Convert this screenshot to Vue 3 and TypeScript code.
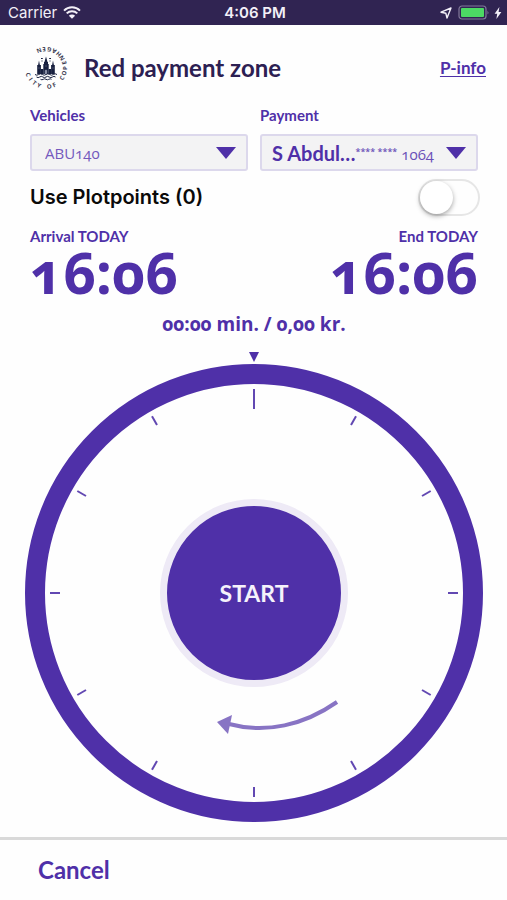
<script setup lang="ts">
import { computed, ref } from 'vue'

interface SealLetter {
  char: string
  transform: string
}

interface Tick {
  angle: number
  length: number
}

const vehicle = ref('ABU140')
const payer = ref('S Abdul…')
const usePlotpoints = ref(false)
const plotpoints = ref(0)
const arrival = ref('16:06')
const end = ref('16:06')
const duration = ref('00:00')
const price = ref('0,00')

const summary = computed(() => `${duration.value} min. / ${price.value} kr.`)

// The seal's lettering runs counter-clockwise, with the letter tops facing the centre.
const sealText = 'CITY OF COPENHAGEN'
const sealLetters: SealLetter[] = sealText.split('').map((char, i) => ({
  char,
  transform: `rotate(${70 - i * 16}) translate(0 21)`,
}))

const ticks: Tick[] = Array.from({ length: 12 }, (_, i) => ({
  angle: i * 30,
  length: i === 0 ? 20 : 10,
}))
</script>

<template>
  <div class="screen">
    <div class="status">
      <div class="status-side">
        <span class="carrier">Carrier</span>
        <svg class="wifi" viewBox="0 0 18 13" aria-hidden="true">
          <path d="M1 4.6a11.4 11.4 0 0 1 16 0" />
          <path d="M3.7 7.4a7.5 7.5 0 0 1 10.6 0" />
          <path class="solid" d="M9 12.8 5.9 9.7a4.4 4.4 0 0 1 6.2 0z" />
        </svg>
      </div>
      <span class="clock">4:06 PM</span>
      <div class="status-side status-right">
        <svg class="location" viewBox="0 0 12 12" aria-hidden="true">
          <path d="M11 1 7 11 5.8 6.2 1 5.2z" />
        </svg>
        <svg class="battery" viewBox="0 0 32 15" aria-hidden="true">
          <rect class="shell" x="1" y="1" width="27" height="13" rx="3" />
          <rect class="charge" x="3" y="3" width="23" height="9" rx="1" />
          <path class="cap" d="M29.5 5.5q1.8 2 0 4z" />
        </svg>
        <svg class="bolt" viewBox="0 0 8 12" aria-hidden="true">
          <path d="M5.4 0 .6 6.8h2.6L2.4 12l5-7H4.6z" />
        </svg>
      </div>
    </div>

    <header class="header">
      <svg class="seal" viewBox="-22 -22 44 44" role="img" aria-label="City of Copenhagen">
        <text v-for="(letter, i) in sealLetters" :key="i" :transform="letter.transform">{{ letter.char }}</text>
        <path class="ink" d="M-2.7 6V-4h.7v-2.2h.8v-1L0-11.4l1.2 4.2v1H2V-4h.7V6z" />
        <path class="ink" d="M-8.8 6v-9h.9L-7-7.4l.9 4.4h1V6zM8.8 6v-9h-.9L7-7.4 6.1-3h-1V6z" />
        <path class="ink" d="M-5.2 6V1h2.6v5zM5.2 6V1H2.6v5z" />
        <path class="gap" d="M-.8 6V2.8a.8.8 0 0 1 1.6 0V6zM-7.6 0h1.2M6.4 0h1.2M-.6-2h1.2" />
        <path class="wave" d="M-11 6.5q1.8 1.4 3.7 0t3.7 0 3.6 0 3.7 0 3.7 0 3.6 0M-9.5 9q1.6 1.3 3.2 0t3.2 0 3.1 0 3.2 0 3.2 0 3.1 0M-5.5 11.3q1.4 1 2.8 0t2.7 0 2.8 0 2.7 0" />
        <path class="wave" d="M-5-9.5h1.8M3.2-9.5H5M-4-7.5v1M4-7.5v1" />
      </svg>
      <h1 class="title">Red payment zone</h1>
      <a class="info" href="#p-info">P-info</a>
    </header>

    <main class="content">
      <div class="fields">
        <div class="field">
          <label class="caption" for="vehicle">Vehicles</label>
          <div class="picker">
            <select id="vehicle" v-model="vehicle" class="vehicle">
              <option>ABU140</option>
            </select>
          </div>
        </div>
        <div class="field">
          <label class="caption" for="payment">Payment</label>
          <div class="picker">
            <select id="payment" v-model="payer" class="payer">
              <option>S Abdul…</option>
            </select>
            <span class="card"><span class="mask">**** ****</span>1064</span>
          </div>
        </div>
      </div>

      <div class="plotpoints">
        <label for="plotpoints">Use Plotpoints ({{ plotpoints }})</label>
        <input id="plotpoints" v-model="usePlotpoints" class="switch" type="checkbox" role="switch" />
      </div>

      <div class="times">
        <div>
          <p class="caption">Arrival TODAY</p>
          <p class="time">{{ arrival }}</p>
        </div>
        <div class="time-end">
          <p class="caption">End TODAY</p>
          <p class="time">{{ end }}</p>
        </div>
      </div>

      <p class="summary">{{ summary }}</p>
    </main>

    <section class="dial-area">
      <svg class="pointer" viewBox="0 0 10 10" aria-hidden="true"><path d="M0 0h10L5 10z" /></svg>
      <div class="dial">
        <svg class="face" viewBox="-229 -229 458 458" aria-hidden="true">
          <circle class="ring" r="219" />
          <line
            v-for="tick in ticks"
            :key="tick.angle"
            class="tick"
            y1="-204"
            :y2="tick.length - 204"
            :transform="`rotate(${tick.angle})`"
          />
          <path class="arc" d="M83 109C50 132 12 141-25 131" />
          <path class="head" d="M-37 129-22 122-26 141z" />
        </svg>
        <button class="start" type="button">START</button>
      </div>
    </section>

    <footer class="footer">
      <button class="cancel" type="button">Cancel</button>
    </footer>
  </div>
</template>

<style>
body {
  margin: 0;
  background: #fefefe;
}
</style>

<style scoped>
.screen {
  --purple: #4f30a8;
  --navy: #2c2052;
  --figures: "Open Sans", "Noto Sans", sans-serif;
  display: flex;
  flex-direction: column;
  min-height: 100vh;
  color: var(--purple);
  font-family: Lato, "Open Sans", sans-serif;
  font-variant-numeric: oldstyle-nums;
}

p,
h1 {
  margin: 0;
}

button {
  border: 0;
  font-family: inherit;
  cursor: pointer;
}

.status {
  display: grid;
  grid-template-columns: 1fr auto 1fr;
  align-items: center;
  height: 25px;
  padding: 0 5px 0 8px;
  background: #302452;
  color: #f3f0f8;
  font: 15px/25px Inter, sans-serif;
}

.status-side {
  display: flex;
  align-items: center;
  gap: 6px;
}

.status-right {
  justify-content: flex-end;
  gap: 4px;
}

.clock {
  font-weight: 600;
}

.wifi {
  width: 18px;
  height: 13px;
  fill: none;
  stroke: #f3f0f8;
  stroke-width: 2;
}

.wifi .solid {
  fill: #f3f0f8;
  stroke: none;
}

.location {
  width: 12px;
  height: 12px;
  margin-right: 2px;
  fill: none;
  stroke: #f3f0f8;
  stroke-width: 1.4;
  stroke-linejoin: round;
}

.battery {
  width: 32px;
  height: 15px;
}

.shell {
  fill: none;
  stroke: #81799a;
  stroke-width: 1.2;
}

.charge {
  fill: #4cd964;
}

.cap {
  fill: #81799a;
}

.bolt {
  width: 8px;
  height: 12px;
  fill: #f3f0f8;
}

.header {
  display: flex;
  align-items: center;
  padding: 21px 21px 0 24px;
}

.seal {
  width: 44px;
  height: 44px;
  margin-right: 16px;
}

.seal text {
  fill: #3a3a50;
  font: 700 6px "Open Sans", sans-serif;
  text-anchor: middle;
}

.ink {
  fill: #18203f;
}

.gap {
  fill: #9ba0b5;
  stroke: #9ba0b5;
  stroke-width: 0.6;
}

.wave {
  fill: none;
  stroke: #18203f;
  stroke-width: 1;
}

.title {
  flex: 1;
  color: var(--navy);
  font-size: 24px;
  font-weight: 700;
  line-height: 28px;
}

.info {
  color: var(--purple);
  font-size: 17px;
  font-weight: 700;
  line-height: 24px;
  text-underline-offset: 2px;
}

.content {
  padding: 16px 29px 0 30px;
}

.fields {
  display: grid;
  grid-template-columns: 1fr 1fr;
  gap: 12px;
}

.field {
  display: flex;
  flex-direction: column;
  gap: 10px;
}

.caption {
  font-size: 15px;
  font-weight: 700;
  line-height: 18px;
}

.picker {
  position: relative;
}

.picker::after {
  content: "";
  position: absolute;
  top: 13px;
  right: 12px;
  border: solid transparent;
  border-width: 12px 10px 0;
  border-top-color: var(--purple);
  pointer-events: none;
}

select {
  display: block;
  width: 100%;
  height: 37px;
  border: 2px solid #dcd8ec;
  border-radius: 3px;
  background: #f3f3f4;
  color: inherit;
  font-family: inherit;
  font-variant-numeric: inherit;
  appearance: none;
}

.vehicle {
  padding: 0 13px;
  color: #7459bd;
  font-family: var(--figures);
  font-size: 15px;
}

.payer {
  padding: 0 10px;
  font-size: 20px;
  font-weight: 700;
}

.card {
  position: absolute;
  top: 9px;
  right: 44px;
  display: flex;
  align-items: flex-start;
  gap: 4px;
  color: #6a50b8;
  font-family: var(--figures);
  font-size: 15px;
  line-height: 22px;
  pointer-events: none;
}

.mask {
  font-size: 9px;
  font-weight: 600;
  line-height: 18px;
}

.plotpoints {
  display: flex;
  align-items: center;
  justify-content: space-between;
  margin: 7px -2px 0 0;
  color: #0a0a0a;
  font: 600 20px/38px Inter, sans-serif;
}

.switch {
  display: flex;
  align-items: center;
  width: 62px;
  height: 37px;
  margin: 0;
  border: 2px solid #e6e6e6;
  border-radius: 19px;
  background: #fefefe;
  appearance: none;
  cursor: pointer;
}

.switch::before {
  content: "";
  width: 33px;
  height: 33px;
  border-radius: 50%;
  background: #fff;
  box-shadow: 0 2px 5px rgb(0 0 0 / 35%);
}

.switch:checked {
  background: var(--purple);
}

.switch:checked::before {
  margin-left: auto;
}

.times {
  display: flex;
  justify-content: space-between;
  margin-top: 11px;
}

.time-end {
  text-align: right;
}

.time {
  font-family: var(--figures);
  font-size: 57px;
  font-weight: 700;
  line-height: 54px;
}

.summary {
  margin-top: 13px;
  font-family: var(--figures);
  font-size: 19px;
  font-weight: 700;
  line-height: 24px;
  text-align: center;
}

.dial-area {
  display: flex;
  flex-direction: column;
  align-items: center;
  gap: 2px;
  padding: 16px 24px 15px 25px;
}

.pointer {
  width: 10px;
  height: 10px;
  fill: var(--purple);
}

.dial {
  display: grid;
  place-items: center;
  width: 100%;
  max-width: 520px;
  aspect-ratio: 1;
}

.face,
.start {
  grid-area: 1 / 1;
}

.face {
  width: 100%;
}

.ring {
  fill: none;
  stroke: var(--purple);
  stroke-width: 20;
}

.tick {
  stroke: #6248b2;
  stroke-width: 2;
}

.arc {
  fill: none;
  stroke: #8874c4;
  stroke-width: 4;
}

.head {
  fill: #8874c4;
}

.start {
  box-sizing: border-box;
  width: 41%;
  aspect-ratio: 1;
  padding: 0;
  border: 7px solid #eeeaf6;
  border-radius: 50%;
  background: var(--purple);
  color: #f5f2fb;
  font-size: 23px;
  font-weight: 700;
}

.footer {
  flex: 1;
  border-top: 3px solid #d9d9d9;
  padding: 14px 30px;
}

.cancel {
  padding: 0 8px;
  background: none;
  color: var(--purple);
  font-size: 24px;
  font-weight: 700;
  line-height: 32px;
}
</style>
